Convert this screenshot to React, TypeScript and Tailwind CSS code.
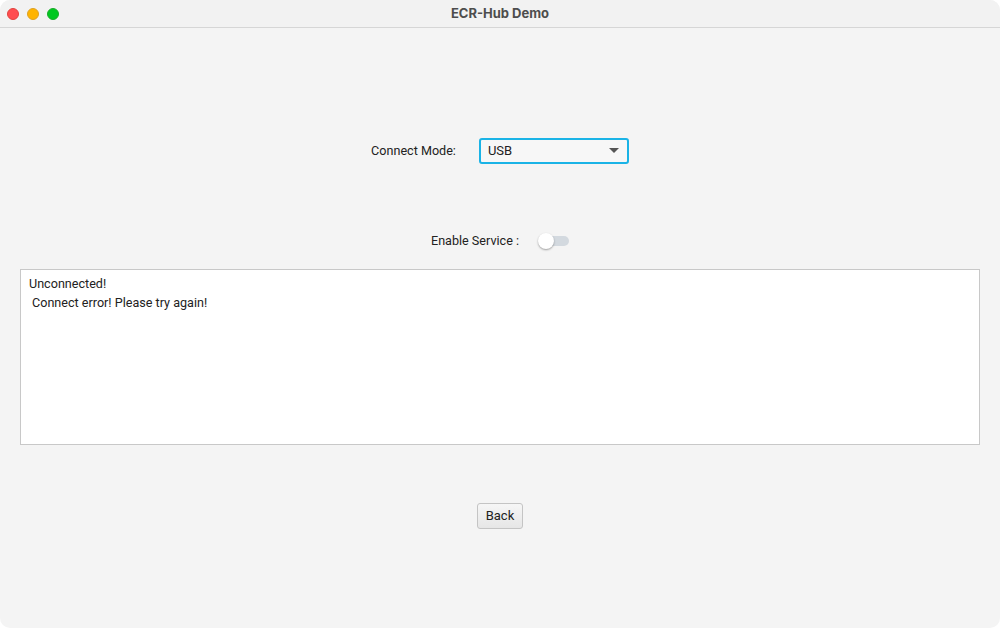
import React from 'react'

const App: React.FC = () => {
  return (
    <div className="w-[1000px] h-[628px] overflow-hidden rounded-[10px] bg-[#f4f4f4] flex flex-col text-[12.6px] text-[#222] font-['Roboto','Liberation_Sans',sans-serif]">
      {/* title bar */}
      <div className="h-[28px] shrink-0 bg-[#f2f2f2] border-b border-[#d6d6d6] flex items-center relative">
        <div className="flex items-center gap-[8px] pl-[7px]">
          <span className="w-[12px] h-[12px] rounded-full bg-[#ff4d4f] border border-[#e0443e]" />
          <span className="w-[12px] h-[12px] rounded-full bg-[#ffb400] border border-[#dea123]" />
          <span className="w-[12px] h-[12px] rounded-full bg-[#00c820] border border-[#1aab29]" />
        </div>
        <div className="absolute inset-0 flex items-center justify-center font-bold text-[13px] text-[#4d4d4d] font-['Inter',sans-serif]">
          ECR-Hub Demo
        </div>
      </div>

      {/* connect mode */}
      <div className="mt-[110px] flex items-center justify-center">
        <span className="mr-[23px]">Connect Mode:</span>
        <div className="w-[150px] h-[26px] rounded-[3px] border-2 border-[#1ab3e6] bg-[#f7f7f7] flex items-center justify-between pl-[7px] pr-[8px] text-[13px]">
          <span>USB</span>
          <svg width="10" height="6" viewBox="0 0 10 6">
            <path d="M0 0 L10 0 L5 5 Z" fill="#555" />
          </svg>
        </div>
      </div>

      {/* enable service */}
      <div className="mt-[68px] flex items-center justify-center">
        <span className="mr-[19px]">Enable Service :</span>
        <div className="relative w-[31px] h-[14px] flex items-center">
          <div className="ml-[4px] w-[27px] h-[10px] rounded-full bg-[#d3d9df]" />
          <div className="absolute left-0 top-[-1px] w-[16px] h-[16px] rounded-full bg-white shadow-[0_1px_2px_rgba(0,0,0,0.35)]" />
        </div>
      </div>

      {/* log area */}
      <div className="mt-[18px] mx-[20px] h-[176px] bg-white border border-[#c8c8c8] px-[8px] pt-[4px] leading-[19px]">
        <div>Unconnected!</div>
        <div className="pl-[3px]">Connect error! Please try again!</div>
      </div>

      {/* back */}
      <div className="mt-[58px] flex justify-center">
        <button className="h-[26px] px-[8px] rounded-[3px] border border-[#c4c4c4] bg-gradient-to-b from-[#f6f6f6] to-[#e6e6e6] text-[13px] text-[#222]">
          Back
        </button>
      </div>
    </div>
  )
}

export default App
